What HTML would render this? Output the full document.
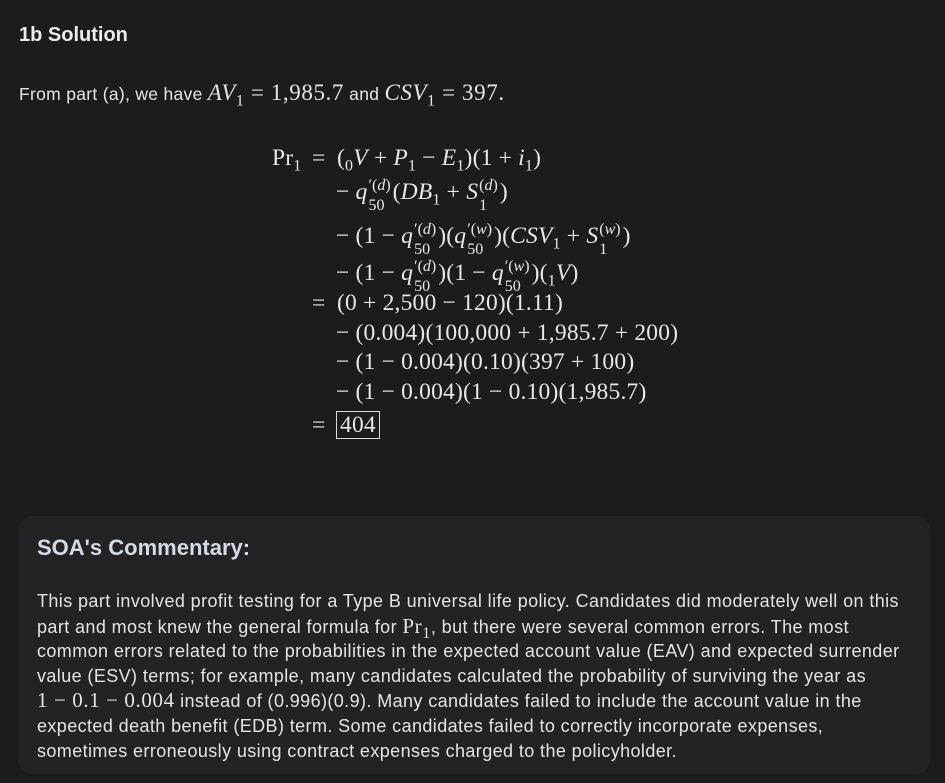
<!DOCTYPE html>
<html><head><meta charset="utf-8"><style>
html,body{margin:0;padding:0;}
body{width:945px;height:783px;background:#1b1c1e;color:#e6e6e6;font-family:"Liberation Sans",sans-serif;position:relative;overflow:hidden;}
.t{position:absolute;left:19px;top:24px;font-size:20px;font-weight:bold;color:#ececec;}
.p{position:absolute;left:19px;top:80px;font-size:17.5px;letter-spacing:0.3px;white-space:nowrap;}
.m{font-family:"Liberation Serif",serif;font-size:23px;letter-spacing:0.6px;}
i{font-style:italic;}
.l{position:absolute;white-space:nowrap;font-family:"Liberation Serif",serif;font-size:23.5px;letter-spacing:0.2px;line-height:30px;color:#e8e8e8;}
sub,sup{font-size:16px;line-height:0;}
.ss{display:inline-block;vertical-align:-11px;line-height:20px;font-size:16px;letter-spacing:0;margin:0 2px 0 1px;}
.ss div{display:block;}
.box{border:1.5px solid #ddd;padding:0 3px;}
.c{position:absolute;left:18px;top:516px;width:912px;height:258px;background:#222325;border-radius:14px;}
.h{position:absolute;left:37px;top:535px;font-size:22px;font-weight:bold;color:#d5dbe3;}
.b{position:absolute;left:37px;top:589px;font-size:18px;letter-spacing:0.4px;line-height:24.6px;white-space:nowrap;color:#e4e4e4;}
</style></head><body>
<div class="t">1b Solution</div>
<div class="p">From part (a), we have <span class="m"><i>AV</i><sub>1</sub> = 1,985.7</span> and <span class="m"><i>CSV</i><sub>1</sub> = 397.</span></div>

<div class="l" style="left:272px;top:143px">Pr<sub>1</sub></div>
<div class="l" style="left:312px;top:143px">=</div>
<div class="l" style="left:337px;top:143px">(<sub>0</sub><i>V</i> + <i>P</i><sub>1</sub> − <i>E</i><sub>1</sub>)(1 + <i>i</i><sub>1</sub>)</div>

<div class="l" style="left:336px;top:176px">− <i>q</i><span class="ss"><div>′(<i>d</i>)</div><div>50</div></span>(<i>DB</i><sub>1</sub> + <i>S</i><span class="ss"><div>(<i>d</i>)</div><div>1</div></span>)</div>

<div class="l" style="left:336px;top:220px">− (1 − <i>q</i><span class="ss"><div>′(<i>d</i>)</div><div>50</div></span>)(<i>q</i><span class="ss"><div>′(<i>w</i>)</div><div>50</div></span>)(<i>CSV</i><sub>1</sub> + <i>S</i><span class="ss"><div>(<i>w</i>)</div><div>1</div></span>)</div>

<div class="l" style="left:336px;top:257px">− (1 − <i>q</i><span class="ss"><div>′(<i>d</i>)</div><div>50</div></span>)(1 − <i>q</i><span class="ss"><div>′(<i>w</i>)</div><div>50</div></span>)(<sub>1</sub><i>V</i>)</div>

<div class="l" style="left:312px;top:288px">=</div>
<div class="l" style="left:337px;top:288px">(0 + 2,500 − 120)(1.11)</div>
<div class="l" style="left:336px;top:318px">− (0.004)(100,000 + 1,985.7 + 200)</div>
<div class="l" style="left:336px;top:347px">− (1 − 0.004)(0.10)(397 + 100)</div>
<div class="l" style="left:336px;top:377px">− (1 − 0.004)(1 − 0.10)(1,985.7)</div>
<div class="l" style="left:312px;top:410px">=</div>
<div class="l" style="left:336px;top:410px"><span class="box">404</span></div>

<div class="c"></div>
<div class="h">SOA's Commentary:</div>
<div class="b">This part involved profit testing for a Type B universal life policy. Candidates did moderately well on this<br>part and most knew the general formula for <span class="m" style="font-size:21px">Pr<sub>1</sub></span>, but there were several common errors. The most<br>common errors related to the probabilities in the expected account value (EAV) and expected surrender<br>value (ESV) terms; for example, many candidates calculated the probability of surviving the year as<br><span class="m" style="font-size:21px">1 − 0.1 − 0.004</span> instead of (0.996)(0.9). Many candidates failed to include the account value in the<br>expected death benefit (EDB) term. Some candidates failed to correctly incorporate expenses,<br>sometimes erroneously using contract expenses charged to the policyholder.</div>
</body></html>
